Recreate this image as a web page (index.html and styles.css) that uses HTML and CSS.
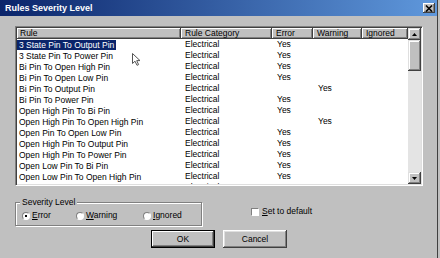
FILE: index.html
```html
<!DOCTYPE html>
<html lang="en">

<head>
    <meta charset="UTF-8">
    <title>Rules Severity Level</title>
    <link rel="stylesheet" href="styles.css">
</head>

<body>

    <div class="window">
        <div class="titlebar">
            <span class="title">Rules Severity Level</span>
            <span class="close-btn">
                <svg width="8" height="7" viewBox="0 0 8 7"><path d="M1 0.5 L7 6.5 M7 0.5 L1 6.5" stroke="#000" stroke-width="1.6"/></svg>
            </span>
        </div>

        <div class="content">
            <div class="listview">
                <div class="list-main">
                    <div class="list-header">
                        <div class="hcell first">Rule</div>
                        <div class="hcell">Rule Category</div>
                        <div class="hcell">Error</div>
                        <div class="hcell">Warning</div>
                        <div class="hcell">Ignored</div>
                    </div>
                    <div class="list-body">
                        <div class="row"><div class="cell first"><span class="label selected">3 State Pin To Output Pin</span></div><div class="cell">Electrical</div><div class="cell yes">Yes</div><div class="cell"></div><div class="cell"></div></div>
                        <div class="row"><div class="cell first"><span class="label">3 State Pin To Power Pin</span></div><div class="cell">Electrical</div><div class="cell yes">Yes</div><div class="cell"></div><div class="cell"></div></div>
                        <div class="row"><div class="cell first"><span class="label">Bi Pin To Open High Pin</span></div><div class="cell">Electrical</div><div class="cell yes">Yes</div><div class="cell"></div><div class="cell"></div></div>
                        <div class="row"><div class="cell first"><span class="label">Bi Pin To Open Low Pin</span></div><div class="cell">Electrical</div><div class="cell yes">Yes</div><div class="cell"></div><div class="cell"></div></div>
                        <div class="row"><div class="cell first"><span class="label">Bi Pin To Output Pin</span></div><div class="cell">Electrical</div><div class="cell"></div><div class="cell yes">Yes</div><div class="cell"></div></div>
                        <div class="row"><div class="cell first"><span class="label">Bi Pin To Power Pin</span></div><div class="cell">Electrical</div><div class="cell yes">Yes</div><div class="cell"></div><div class="cell"></div></div>
                        <div class="row"><div class="cell first"><span class="label">Open High Pin To Bi Pin</span></div><div class="cell">Electrical</div><div class="cell yes">Yes</div><div class="cell"></div><div class="cell"></div></div>
                        <div class="row"><div class="cell first"><span class="label">Open High Pin To Open High Pin</span></div><div class="cell">Electrical</div><div class="cell"></div><div class="cell yes">Yes</div><div class="cell"></div></div>
                        <div class="row"><div class="cell first"><span class="label">Open Pin To Open Low Pin</span></div><div class="cell">Electrical</div><div class="cell yes">Yes</div><div class="cell"></div><div class="cell"></div></div>
                        <div class="row"><div class="cell first"><span class="label">Open High Pin To Output Pin</span></div><div class="cell">Electrical</div><div class="cell yes">Yes</div><div class="cell"></div><div class="cell"></div></div>
                        <div class="row"><div class="cell first"><span class="label">Open High Pin To Power Pin</span></div><div class="cell">Electrical</div><div class="cell yes">Yes</div><div class="cell"></div><div class="cell"></div></div>
                        <div class="row"><div class="cell first"><span class="label">Open Low Pin To Bi Pin</span></div><div class="cell">Electrical</div><div class="cell yes">Yes</div><div class="cell"></div><div class="cell"></div></div>
                        <div class="row"><div class="cell first"><span class="label">Open Low Pin To Open High Pin</span></div><div class="cell">Electrical</div><div class="cell yes">Yes</div><div class="cell"></div><div class="cell"></div></div>
                        <div class="row"><div class="cell first"><span class="label">Open Low Pin To Output Pin</span></div><div class="cell">Electrical</div><div class="cell yes">Yes</div><div class="cell"></div><div class="cell"></div></div>
                    </div>
                </div>
                <div class="scrollbar">
                    <div class="sb-btn">
                        <svg width="5" height="3" viewBox="0 0 5 3"><path d="M2.5 0 L5 3 L0 3 Z" fill="#000"/></svg>
                    </div>
                    <div class="sb-thumb"></div>
                    <div class="sb-track"></div>
                    <div class="sb-btn">
                        <svg width="5" height="3" viewBox="0 0 5 3"><path d="M0 0 L5 0 L2.5 3 Z" fill="#000"/></svg>
                    </div>
                </div>
            </div>

            <div class="options">
                <fieldset class="group">
                    <legend>Severity Level</legend>
                    <div class="radios">
                        <div class="opt"><span class="radio checked"></span><span><u>E</u>rror</span></div>
                        <div class="opt"><span class="radio"></span><span><u>W</u>arning</span></div>
                        <div class="opt"><span class="radio"></span><span><u>I</u>gnored</span></div>
                    </div>
                </fieldset>
                <div class="check">
                    <span class="checkbox"></span>
                    <span><u>S</u>et to default</span>
                </div>
            </div>

            <div class="buttons">
                <button class="btn default">OK</button>
                <button class="btn">Cancel</button>
            </div>
        </div>

        <svg class="cursor" width="9" height="13" viewBox="0 0 9 13">
            <path d="M0.5 0.5 V10.5 L3 8.2 L5 12.3 L6.6 11.6 L4.7 7.6 H8 Z" fill="#fff" stroke="#555" stroke-width="1"/>
        </svg>
    </div>

</body>

</html>
```

FILE: styles.css
```css
body {
    margin: 0;
    background-color: #c0c0c0;
    font-family: 'Liberation Sans', Arial, sans-serif;
    font-size: 8.5px;
    color: #000;
}

.window {
    position: relative;
    width: 438px;
    height: 258px;
    box-sizing: border-box;
    border-right: 1px solid #404040;
    background-color: #c0c0c0;
    overflow: hidden;
}

.titlebar {
    height: 16px;
    display: flex;
    align-items: center;
    justify-content: space-between;
    padding: 0 2px 0 5px;
    background: linear-gradient(90deg, #0a246a, #5f98dc);
    color: #fff;
}

.title {
    font-size: 9px;
    font-weight: bold;
}

.close-btn {
    width: 12px;
    height: 10px;
    display: flex;
    align-items: center;
    justify-content: center;
    background-color: #c0c0c0;
    box-shadow: inset -1px -1px #404040, inset 1px 1px #fff, inset -2px -2px #808080;
}

.content {
    padding: 10px 14px 0 15px;
}

/* list view */
.listview {
    width: 408px;
    height: 160px;
    box-sizing: border-box;
    display: flex;
    padding: 1px;
    border: 1px solid;
    border-color: #808080 #fff #fff #808080;
    box-shadow: inset 1px 1px #404040, inset -1px -1px #dfdfdf;
    background-color: #fff;
}

.list-main {
    flex: 1;
    overflow: hidden;
}

.list-header,
.row {
    display: grid;
    grid-template-columns: 164px 91px 41px 49px 46px;
}

.list-header {
    height: 11px;
    background-color: #c0c0c0;
}

.hcell {
    box-sizing: border-box;
    height: 11px;
    line-height: 10px;
    padding-left: 4px;
    border-right: 1px solid #404040;
    border-bottom: 1px solid #404040;
    box-shadow: inset 1px 1px #fff, inset -1px -1px #808080;
    white-space: nowrap;
    overflow: hidden;
}

.hcell.first {
    padding-left: 3px;
}

.row {
    height: 11px;
    line-height: 11px;
}

.cell {
    padding-left: 4px;
    white-space: nowrap;
    overflow: hidden;
}

.cell.first {
    padding-left: 0;
}

.cell.yes {
    padding-left: 5px;
}

.label {
    display: inline-block;
    height: 10px;
    line-height: 10px;
    margin-top: 1px;
    padding: 0 2px;
    vertical-align: top;
}

.label.selected {
    background-color: #0a246a;
    color: #fff;
}

/* scrollbar */
.scrollbar {
    width: 13px;
    display: flex;
    flex-direction: column;
}

.sb-btn,
.sb-thumb {
    background-color: #c0c0c0;
    box-shadow: inset -1px -1px #404040, inset 1px 1px #dfdfdf, inset -2px -2px #808080, inset 2px 2px #fff;
}

.sb-btn {
    height: 12px;
    display: flex;
    align-items: center;
    justify-content: center;
}

.sb-thumb {
    height: 31px;
}

.sb-track {
    flex: 1;
    background-color: #e4e4e4;
}

/* options */
.options {
    display: flex;
    align-items: flex-start;
    margin-top: 11px;
}

.group {
    width: 187px;
    box-sizing: border-box;
    margin: 0;
    padding: 4px 0 5px 4px;
    border: 1px solid #808080;
    box-shadow: inset 1px 1px #fff, 1px 1px #fff;
}

.group legend {
    padding: 0 2px;
    line-height: 10px;
    background-color: #c0c0c0;
}

.radios {
    display: grid;
    grid-template-columns: 54px 67px auto;
    padding-left: 2px;
    line-height: 9px;
}

.opt {
    display: flex;
    align-items: center;
    gap: 2px;
}

.radio {
    position: relative;
    width: 8px;
    height: 8px;
    box-sizing: border-box;
    border-radius: 50%;
    border: 1px solid;
    border-color: #808080 #fff #fff #808080;
    background-color: #fff;
}

.radio.checked::after {
    content: "";
    position: absolute;
    left: 2px;
    top: 2px;
    width: 2px;
    height: 2px;
    background-color: #000;
}

.check {
    display: flex;
    align-items: center;
    gap: 3px;
    margin: 10px 0 0 49px;
    line-height: 9px;
}

.checkbox {
    width: 8px;
    height: 8px;
    box-sizing: border-box;
    border: 1px solid;
    border-color: #808080 #fff #fff #808080;
    background-color: #fff;
}

/* buttons */
.buttons {
    display: flex;
    justify-content: center;
    gap: 8px;
    margin-top: 4px;
}

.btn {
    width: 64px;
    height: 18px;
    padding: 0;
    border: none;
    background-color: #c0c0c0;
    font-family: 'Liberation Sans', Arial, sans-serif;
    font-size: 8.5px;
    color: #000;
    box-shadow: inset -1px -1px #404040, inset 1px 1px #fff, inset -2px -2px #808080, inset 2px 2px #dfdfdf;
}

.btn.default {
    border: 1px solid #000;
    box-shadow: inset -1px -1px #404040, inset 1px 1px #fff, inset -2px -2px #808080;
}

.cursor {
    position: absolute;
    left: 132px;
    top: 53px;
}
```
